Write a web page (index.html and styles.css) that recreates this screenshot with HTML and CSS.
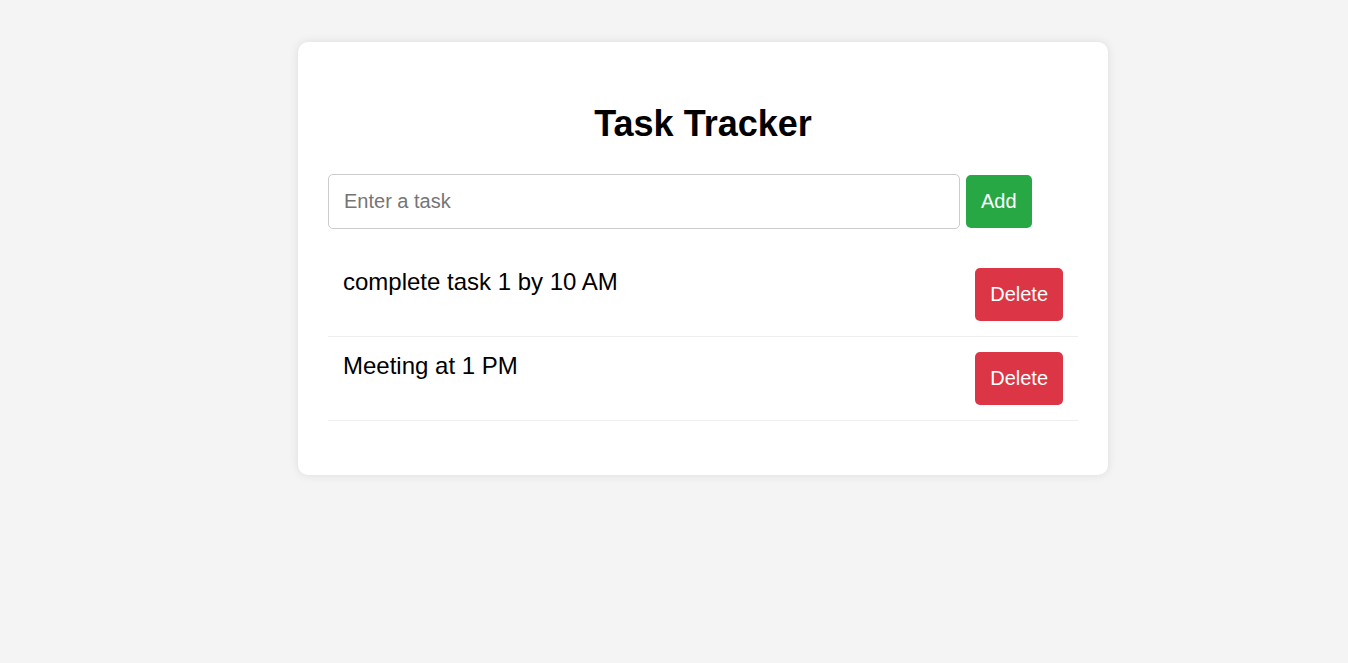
FILE: index.html
```html
<!DOCTYPE html>
<html lang="en">
<head>
<meta charset="utf-8">
<title>Task Tracker</title>
<link rel="stylesheet" href="styles.css">
</head>
<body>
  <div class="card">
    <h1 class="title">Task Tracker</h1>
    <div class="add-row">
      <input class="task-input" type="text" placeholder="Enter a task">
      <button class="btn btn-add">Add</button>
    </div>
    <ul class="task-list">
      <li class="task-item"><span class="task-text">complete task 1 by 10 AM</span><button class="btn btn-delete">Delete</button></li>
      <li class="task-item"><span class="task-text">Meeting at 1 PM</span><button class="btn btn-delete">Delete</button></li>
    </ul>
  </div>
</body>
</html>
```

FILE: styles.css
```css
html, body {
  margin: 0;
  padding: 0;
}
body {
  background: #f4f4f4;
  font-family: "Liberation Sans", Arial, sans-serif;
  min-height: 663px;
}
.card {
  box-sizing: border-box;
  width: 810px;
  margin: 42px 0 0 298px;
  padding: 30px;
  background: #fff;
  border-radius: 10px;
  box-shadow: 0 0 10px rgba(0, 0, 0, 0.1);
}
.title {
  margin: 31px 0 30px;
  font-size: 36px;
  line-height: 41px;
  font-weight: bold;
  text-align: center;
  color: #000;
}
.add-row {
  display: flex;
  align-items: center;
  gap: 6px;
}
.task-input {
  box-sizing: border-box;
  width: 632px;
  height: 55px;
  padding: 15px;
  font-family: inherit;
  font-size: 20px;
  border: 1px solid #ccc;
  border-radius: 5px;
  color: #000;
  outline: none;
}
.task-input::placeholder {
  color: #757575;
}
.btn {
  border: none;
  border-radius: 5px;
  padding: 15px;
  font-family: inherit;
  font-size: 20px;
  line-height: 23px;
  color: #fff;
  cursor: pointer;
}
.btn-add {
  background: #28a745;
}
.btn-delete {
  background: #dc3545;
}
.task-list {
  list-style: none;
  margin: 24px 0;
  padding: 0;
}
.task-item {
  display: flex;
  justify-content: space-between;
  padding: 15px;
  border-bottom: 1px solid #eee;
}
.task-text {
  font-size: 24px;
  line-height: 27px;
  color: #000;
}
```
